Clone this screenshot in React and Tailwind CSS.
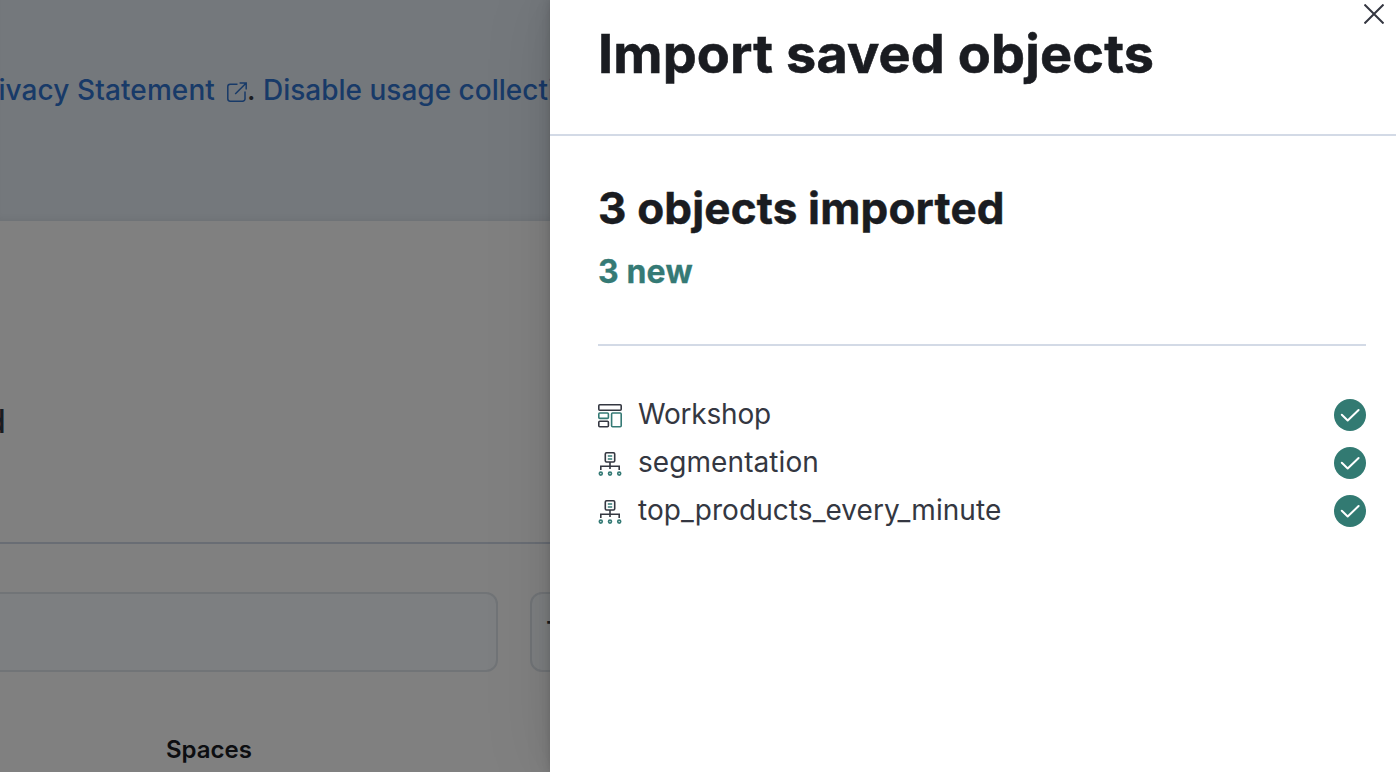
import React from 'react';

function PopoutIcon() {
  return (
    <svg className="ml-3 mt-[3px] size-5 shrink-0" viewBox="0 0 20 20" fill="none" stroke="#183a68" strokeWidth="1.5">
      <path d="M10.5 2.2H3.2A2.4 2.4 0 0 0 .8 4.6v12.2a2.4 2.4 0 0 0 2.4 2.4h12.4a2.4 2.4 0 0 0 2.4-2.4V9.5M8.2 12 19 1.2M12.6 1h6.6v6.6" />
    </svg>
  );
}

function DashboardIcon() {
  return (
    <svg className="mt-[2px] size-6 shrink-0" viewBox="0 0 24 24" fill="none" strokeWidth="1.6">
      <g stroke="#343741">
        <rect x=".8" y=".8" width="22.4" height="5.4" rx="1" />
        <rect x=".8" y="17.2" width="9.6" height="5.6" rx="1" />
      </g>
      <g stroke="#357a75">
        <rect x=".8" y="9" width="9.6" height="5.4" rx="1" />
        <rect x="13.6" y="9" width="9.6" height="13.8" rx="1" />
      </g>
    </svg>
  );
}

function IndexPatternIcon() {
  return (
    <svg className="mt-[2px] size-6 shrink-0" viewBox="0 0 24 24" fill="none" strokeWidth="1.6">
      <g stroke="#343741">
        <rect x="7.3" y=".8" width="9.4" height="9.2" rx="1.2" />
        <path d="M12 10v7M2.8 18v-3.7h18.4V18" />
      </g>
      <g stroke="#357a75">
        <path d="M9.8 4h4.4M9.8 7h4.4" />
        <circle cx="2.8" cy="21.6" r="1.5" />
        <circle cx="12" cy="21.6" r="1.5" />
        <circle cx="21.2" cy="21.6" r="1.5" />
      </g>
    </svg>
  );
}

function SuccessBadge() {
  return (
    <svg className="size-8 shrink-0" viewBox="0 0 32 32" fill="none">
      <circle cx="16" cy="16" r="16" fill="#327a72" />
      <path d="m7.8 15.8 5.9 5.7L24.6 11" stroke="#fff" strokeWidth="2" strokeLinecap="round" strokeLinejoin="round" />
    </svg>
  );
}

const objects = [
  { name: 'Workshop', Icon: DashboardIcon, text: 'tracking-[-0.2px]' },
  { name: 'segmentation', Icon: IndexPatternIcon, text: 'tracking-[0.08px]' },
  { name: 'top_products_every_minute', Icon: IndexPatternIcon, text: 'tracking-[0.06px]' },
];

function Backdrop() {
  return (
    <div className="flex w-[550px] shrink-0 flex-col overflow-hidden bg-[#808080]">
      <div className="flex h-[221px] shrink-0 items-start bg-[#74787c] pt-[70px] shadow-[inset_0_-6px_6px_-4px_rgba(0,0,0,0.06)]">
        <div className="-ml-[17px] flex h-10 items-center whitespace-nowrap text-[28px] font-medium text-[#183a68]">
          <span className="flex w-[232px] justify-end tracking-[0.1px]">rivacy Statement</span>
          <PopoutIcon />
          <span className="w-4 text-[#1a1c21]">.</span>
          <span>Disable usage collection here.</span>
        </div>
      </div>
      <div className="flex h-[323px] shrink-0 items-start border-b-2 border-[#696d74] pt-[181px]">
        <span className="-ml-[14px] text-[32px] font-medium leading-10 text-[#1a1c21]">d</span>
      </div>
      <div className="flex h-32 shrink-0 gap-8 pt-12">
        <div className="-ml-3 h-20 w-[510px] shrink-0 rounded-xl border-2 border-[#717477] bg-[#7d7f81]" />
        <div className="h-20 w-40 shrink-0 rounded-xl border-2 border-[#717477] bg-[#7d7f81] pl-[14px] pt-[18px] text-[28px] font-medium leading-10 text-[#1a1c21]">
          Type
        </div>
      </div>
      <div className="pl-[166px] pt-[62px] text-2xl font-semibold leading-8 text-[#0d0e11]">Spaces</div>
    </div>
  );
}

export default function App() {
  return (
    <div className="flex h-[772px] w-[1396px] overflow-hidden bg-white font-['Inter',sans-serif]">
      <Backdrop />
      <section className="relative z-10 flex w-[846px] shrink-0 flex-col bg-white text-[#1a1c21] shadow-[0_0_8px_rgba(0,0,0,0.12),0_0_24px_rgba(0,0,0,0.1),0_0_70px_rgba(0,0,0,0.09)]">
        <header className="flex h-[136px] shrink-0 items-start justify-between border-b-2 border-[#d3dae6] pl-12 pr-3">
          <h1 className="mt-[22px] whitespace-nowrap text-[54px] font-bold leading-[64px] tracking-[0.12px] [-webkit-text-stroke:0.6px_#1a1c21]">Import saved objects</h1>
          <button aria-label="Close" className="mt-1 size-5">
            <svg viewBox="0 0 20 20" className="size-5" fill="none" stroke="#343741" strokeWidth="2">
              <path d="m.5.5 19 19M19.5.5l-19 19" />
            </svg>
          </button>
        </header>
        <main className="pl-12 pr-[30px] pt-12">
          <h2 className="text-[44px] font-bold leading-[48px] tracking-[0.17px] [-webkit-text-stroke:0.5px_#1a1c21]">3 objects imported</h2>
          <p className="mt-4 text-[32px] font-bold leading-12 tracking-[0.15px] text-[#357a75] [-webkit-text-stroke:0.3px_#357a75]">3 new</p>
          <hr className="mt-12 border-t-2 border-[#d3dae6]" />
          <ul className="mt-[45px]">
            {objects.map(({ name, Icon, text }) => (
              <li key={name} className="flex h-12 items-center">
                <Icon />
                <span className={'-mt-[2px] ml-4 flex-1 text-[28px] leading-10 text-[#343741] ' + text}>{name}</span>
                <SuccessBadge />
              </li>
            ))}
          </ul>
        </main>
      </section>
    </div>
  );
}
